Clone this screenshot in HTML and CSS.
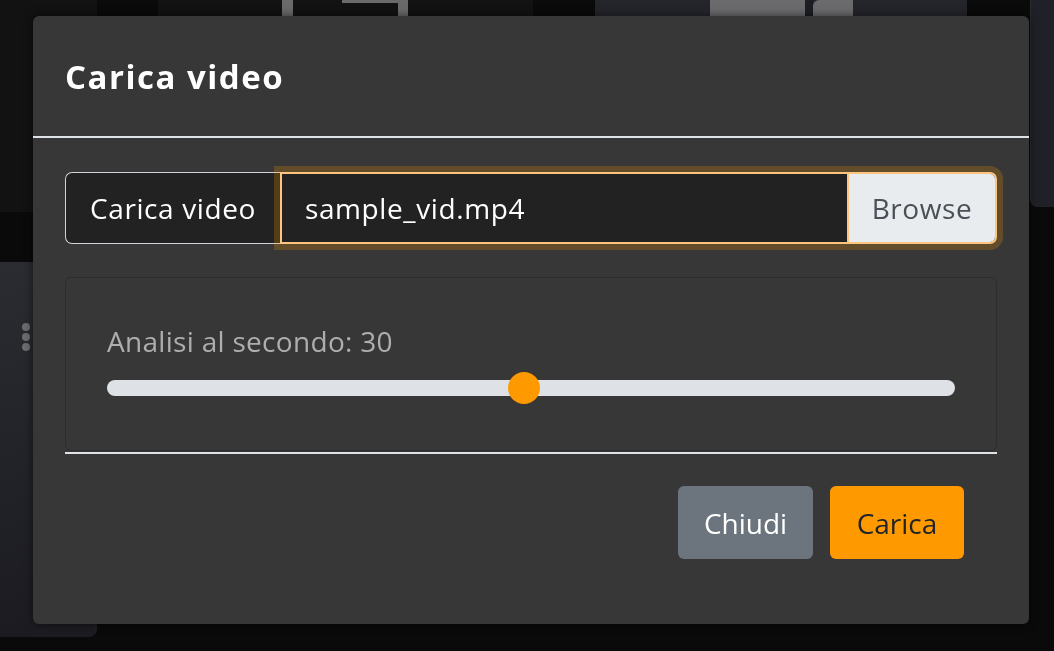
FILE: index.html
```html
<!DOCTYPE html>
<html lang="it">
<head>
<meta charset="utf-8">
<title>Carica video</title>
<link rel="stylesheet" href="styles.css">
</head>
<body>
<div class="page-bg" aria-hidden="true">
  <div class="tile tile-left-top"></div>
  <div class="tile tile-top-mid">
    <span class="gap-124"></span><span class="bar-gray"></span><span class="gap-49"></span><span class="bracket"></span>
  </div>
  <div class="tile tile-top-blue">
    <span class="gap-115"></span><span class="blk-gray"></span><span class="blk-dark"></span><span class="blk-gray blk-round"></span>
  </div>
  <div class="tile tile-right"></div>
  <div class="tile tile-left-card"><span class="dots"><i></i><i></i><i></i></span></div>
</div>

<div class="overlay">
  <div class="modal" role="dialog" aria-labelledby="modal-title">
    <div class="modal-header">
      <h5 class="modal-title" id="modal-title">Carica video</h5>
    </div>
    <div class="modal-body">
      <div class="input-group">
        <div class="input-label">Carica video</div>
        <div class="custom-file">
          <div class="file-name">sample_vid.mp4</div>
          <div class="browse">Browse</div>
        </div>
      </div>
      <div class="rate-card">
        <label class="rate-label" for="rate">Analisi al secondo: 30</label>
        <input class="rate-range" id="rate" type="range" min="1" max="60" value="30">
      </div>
    </div>
    <div class="modal-footer">
      <button class="btn btn-secondary" type="button">Chiudi</button>
      <button class="btn btn-primary" type="button">Carica</button>
    </div>
  </div>
</div>
</body>
</html>
```

FILE: styles.css
```css
html, body {
  margin: 0;
  height: 100%;
}

body {
  background: #0a0a0a;
  overflow: hidden;
  font-family: "Open Sans", "Liberation Sans", sans-serif;
}

/* ---------- page behind the backdrop ---------- */
.page-bg {
  position: fixed;
  inset: 0;
  display: grid;
  grid-template-columns: 97px 61px 375px 62px 372px 63px 1fr;
  grid-template-rows: 16px 191px 5px 50px 375px 1fr;
}

.tile-left-top {
  grid-column: 1;
  grid-row: 1 / 4;
  background: #121212;
}

.tile-top-mid {
  grid-column: 3;
  grid-row: 1;
  background: #121212;
  display: flex;
}

.gap-124 { width: 124px; }
.gap-49 { width: 49px; }
.gap-115 { width: 115px; }

.bar-gray {
  width: 11px;
  background: #6a6a6a;
}

.bracket {
  width: 56px;
  height: 13px;
  border-top: 3px solid #6a6a6a;
  border-right: 10px solid #6a6a6a;
  border-radius: 0 0 0 4px;
}

.tile-top-blue {
  grid-column: 5;
  grid-row: 1;
  background: #24252b;
  display: flex;
}

.blk-gray {
  width: 95px;
  background: #6b6b6d;
}

.blk-dark {
  width: 8px;
  background: #1d1e23;
}

.blk-round {
  width: 40px;
  border-radius: 6px 0 0 0;
}

.tile-right {
  grid-column: 7;
  grid-row: 1 / 3;
  background: #202128;
  border-left: 1px solid #2a2b31;
  border-radius: 0 0 0 8px;
}

.tile-left-card {
  grid-column: 1;
  grid-row: 5;
  background: linear-gradient(180deg, #2b2c31 0%, #222329 55%, #1b1b21 100%);
  border-right: 2px solid #1e1f24;
  border-radius: 0 0 8px 0;
  padding: 61px 0 0 22px;
}

.dots {
  display: flex;
  flex-direction: column;
  gap: 2px;
}

.dots i {
  width: 8px;
  height: 8px;
  border-radius: 50%;
  background: #6c6c6e;
}

/* ---------- modal ---------- */
.overlay {
  position: fixed;
  inset: 0;
  padding: 16px 0 0 33px;
}

.modal {
  width: 996px;
  background: #373737;
  border-radius: 6px;
  box-shadow: 0 0 10px rgba(0, 0, 0, 0.55);
  color: #fff;
}

.modal-header {
  height: 122px;
  box-sizing: border-box;
  border-bottom: 2px solid #dee2e6;
  display: flex;
  align-items: center;
  padding: 0 32px;
}

.modal-title {
  margin: 0;
  font-size: 33px;
  font-weight: 700;
  letter-spacing: 1.5px;
}

.modal-body {
  padding: 34px 32px 0;
}

.input-group {
  display: flex;
  height: 72px;
  font-size: 28px;
  letter-spacing: 0.6px;
}

.input-label {
  width: 215px;
  box-sizing: border-box;
  padding: 0 24px;
  display: flex;
  align-items: center;
  background: #222;
  border: 1px solid #ced4da;
  border-right: 0;
  border-radius: 7px 0 0 7px;
  white-space: nowrap;
}

.custom-file {
  flex: 1;
  display: flex;
  background: #222;
  border: 2px solid #ffc47d;
  border-radius: 0 7px 7px 0;
  box-shadow: 0 0 0 6px rgba(255, 153, 0, 0.22);
}

.file-name {
  flex: 1;
  display: flex;
  align-items: center;
  padding: 0 23px;
}

.browse {
  width: 148px;
  box-sizing: border-box;
  display: flex;
  align-items: center;
  justify-content: center;
  background: #e9ecef;
  color: #495057;
  border-left: 2px solid #ffc47d;
  border-radius: 0 5px 5px 0;
}

.rate-card {
  margin-top: 33px;
  height: 174px;
  box-sizing: border-box;
  border: 1px solid #2d2d2d;
  border-radius: 6px;
  padding: 42px 41px 0;
}

.rate-label {
  display: block;
  font-size: 28px;
  line-height: 42px;
  letter-spacing: 0.3px;
  color: #aeaeae;
}

.rate-range {
  -webkit-appearance: none;
  appearance: none;
  display: block;
  width: 100%;
  height: 32px;
  margin: 10px 0 0;
  padding: 0;
  background: transparent;
}

.rate-range::-webkit-slider-runnable-track {
  height: 16px;
  background: #dee2e6;
  border-radius: 8px;
}

.rate-range::-webkit-slider-thumb {
  -webkit-appearance: none;
  appearance: none;
  width: 32px;
  height: 32px;
  margin-top: -8px;
  border: 0;
  border-radius: 50%;
  background: #ff9900;
}

.modal-footer {
  margin: 1px 32px 0;
  border-top: 2px solid #dee2e6;
  padding: 32px 33px 65px 0;
  display: flex;
  justify-content: flex-end;
  gap: 17px;
}

.btn {
  height: 73px;
  border: 0;
  border-radius: 6px;
  font-family: inherit;
  font-size: 28px;
  padding: 0;
  display: flex;
  align-items: center;
  justify-content: center;
}

.btn-secondary {
  width: 135px;
  background: #6c757d;
  color: #fff;
}

.btn-primary {
  width: 134px;
  background: #ff9900;
  color: #212529;
}
```
